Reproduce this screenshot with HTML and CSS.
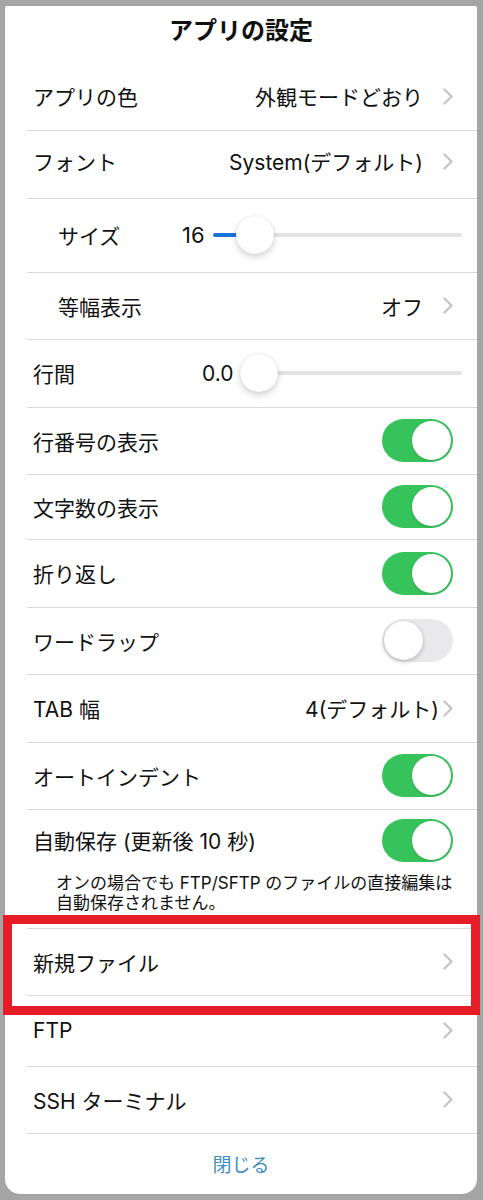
FILE: index.html
```html
<!DOCTYPE html>
<html lang="ja">
<head>
<meta charset="utf-8">
<title>アプリの設定</title>
<link rel="stylesheet" href="styles.css">
</head>
<body>
<div class="sheet">
  <div class="title">アプリの設定</div>
  <div class="list">
    <div class="row h68">
      <span class="label">アプリの色</span>
      <span class="value">外観モードどおり</span>
      <svg class="chev" viewBox="0 0 10 17"><path d="M1.5 1.5 L8.5 8.5 L1.5 15.5"/></svg>
    </div>
    <div class="row h68 raised">
      <span class="label">フォント</span>
      <span class="value">System(デフォルト)</span>
      <svg class="chev" viewBox="0 0 10 17"><path d="M1.5 1.5 L8.5 8.5 L1.5 15.5"/></svg>
    </div>
    <div class="row slider-row size-row h74">
      <span class="label">サイズ</span>
      <span class="num">16</span>
      <div class="slider">
        <div class="fill" style="width: 30px"></div>
        <div class="thumb" style="left: 23px"></div>
      </div>
    </div>
    <div class="row indent h67">
      <span class="label">等幅表示</span>
      <span class="value">オフ</span>
      <svg class="chev" viewBox="0 0 10 17"><path d="M1.5 1.5 L8.5 8.5 L1.5 15.5"/></svg>
    </div>
    <div class="row slider-row gap-row h68">
      <span class="label">行間</span>
      <span class="num">0.0</span>
      <div class="slider">
        <div class="thumb" style="left: 0px"></div>
      </div>
    </div>
    <div class="row h67">
      <span class="label">行番号の表示</span>
      <span class="switch on"><span class="knob"></span></span>
    </div>
    <div class="row h65">
      <span class="label">文字数の表示</span>
      <span class="switch on"><span class="knob"></span></span>
    </div>
    <div class="row h68">
      <span class="label">折り返し</span>
      <span class="switch on"><span class="knob"></span></span>
    </div>
    <div class="row h67">
      <span class="label">ワードラップ</span>
      <span class="switch"><span class="knob"></span></span>
    </div>
    <div class="row h68">
      <span class="label">TAB 幅</span>
      <span class="value tight">4(デフォルト)</span>
      <svg class="chev" viewBox="0 0 10 17"><path d="M1.5 1.5 L8.5 8.5 L1.5 15.5"/></svg>
    </div>
    <div class="row h67">
      <span class="label">オートインデント</span>
      <span class="switch on"><span class="knob"></span></span>
    </div>
    <div class="row-block h119">
      <div class="row-main">
        <span class="label">自動保存 (更新後 10 秒)</span>
        <span class="switch on"><span class="knob"></span></span>
      </div>
      <p class="note">オンの場合でも FTP/SFTP のファイルの直接編集は<br>自動保存されません。</p>
    </div>
    <div class="row h67 marked">
      <span class="label">新規ファイル</span>
      <svg class="chev" viewBox="0 0 10 17"><path d="M1.5 1.5 L8.5 8.5 L1.5 15.5"/></svg>
      <span class="highlight"></span>
    </div>
    <div class="row h71">
      <span class="label">FTP</span>
      <svg class="chev" viewBox="0 0 10 17"><path d="M1.5 1.5 L8.5 8.5 L1.5 15.5"/></svg>
    </div>
    <div class="row h67">
      <span class="label">SSH ターミナル</span>
      <svg class="chev" viewBox="0 0 10 17"><path d="M1.5 1.5 L8.5 8.5 L1.5 15.5"/></svg>
    </div>
    <div class="close">閉じる</div>
  </div>
</div>
</body>
</html>
```

FILE: styles.css
```css
* { box-sizing: border-box; }

html, body {
  margin: 0;
  padding: 0;
}

body {
  background: #a5a5a5;
  font-family: Inter, "Noto Sans CJK JP", sans-serif;
  color: #111;
  width: 483px;
  height: 1200px;
  overflow: hidden;
  padding: 6px 6px 0 5px;
}

.sheet {
  background: #fff;
  width: 472px;
  height: 1188px;
  border-radius: 2px 2px 15px 15px;
  display: flex;
  flex-direction: column;
}

.title {
  height: 57px;
  display: flex;
  align-items: center;
  justify-content: center;
  font-family: "Noto Sans CJK JP", sans-serif;
  font-weight: 700;
  font-size: 24px;
  padding-bottom: 12px;
}

.list {
  display: flex;
  flex-direction: column;
}

.row {
  position: relative;
  display: flex;
  align-items: center;
  padding: 0 24px 2px 28px;
  font-size: 21px;
}

.row.raised { padding-bottom: 8px; }

.row::after,
.row-block::after {
  content: "";
  position: absolute;
  left: 22px;
  right: 0;
  bottom: 0;
  height: 1px;
  background: #d9d9dd;
}

.h65 { height: 65px; }
.h67 { height: 67px; }
.h68 { height: 68px; }
.h71 { height: 71px; }
.h74 { height: 74px; }
.h119 { height: 119px; }

.indent { padding-left: 53px; }

.label {
  flex: 1;
  white-space: nowrap;
}

.value {
  white-space: nowrap;
  margin-right: 20px;
}

.value.tight { margin-right: 4px; }

.chev {
  width: 10px;
  height: 17px;
  flex: none;
}

.chev path {
  fill: none;
  stroke: #c5c5ca;
  stroke-width: 2.4;
  stroke-linecap: round;
  stroke-linejoin: round;
}

/* sliders */
.slider-row { padding-right: 15px; }

.slider-row .label { flex: none; }
.size-row { padding-left: 53px; }
.size-row .label { width: 124px; }
.size-row .num { width: 25px; margin-right: 6px; font-size: 22px; }
.gap-row .label { width: 169px; }
.gap-row .num { width: 33px; margin-right: 5px; }

.num { white-space: nowrap; }

.slider {
  flex: 1;
  position: relative;
  height: 40px;
  display: flex;
  align-items: center;
}

.slider::before {
  content: "";
  position: absolute;
  left: 0;
  right: 0;
  top: 18px;
  height: 4px;
  border-radius: 2px;
  background: #e3e3e6;
}

.fill {
  position: absolute;
  left: 0;
  top: 18px;
  height: 4px;
  border-radius: 2px;
  background: #1a73d9;
}

.thumb {
  position: absolute;
  top: 1px;
  width: 38px;
  height: 38px;
  border-radius: 50%;
  background: #fff;
  box-shadow: 0 3px 7px rgba(0, 0, 0, 0.18), 0 0 1px rgba(0, 0, 0, 0.18);
}

/* switches */
.switch {
  flex: none;
  width: 71px;
  height: 43px;
  border-radius: 22px;
  background: #e9e9eb;
  position: relative;
  display: flex;
  align-items: center;
  padding: 2px;
}

.switch .knob {
  width: 39px;
  height: 39px;
  border-radius: 50%;
  background: #fff;
  box-shadow: 0 2px 5px rgba(0, 0, 0, 0.2), 0 0 1px rgba(0, 0, 0, 0.2);
}

.switch.on {
  background: #37c35c;
  justify-content: flex-end;
}

.switch.on .knob {
  box-shadow: 0 1px 3px rgba(0, 0, 0, 0.15);
}

/* auto-save block */
.row-block {
  position: relative;
  display: flex;
  flex-direction: column;
  padding: 0 24px 0 28px;
}

.row-main {
  height: 60px;
  display: flex;
  align-items: center;
  font-size: 21px;
}

.note {
  margin: 3px 0 0 23px;
  font-size: 17px;
  line-height: 20px;
}

/* annotation overlay */
.highlight {
  position: absolute;
  left: -2px;
  right: -3px;
  top: -14px;
  bottom: -19px;
  border: 9px solid #e61d27;
  pointer-events: none;
  z-index: 2;
}

.close {
  height: 60px;
  display: flex;
  align-items: center;
  justify-content: center;
  font-family: "Noto Sans CJK JP", sans-serif;
  font-size: 19px;
  color: #3f8ec3;
  padding-bottom: 2px;
}
```
